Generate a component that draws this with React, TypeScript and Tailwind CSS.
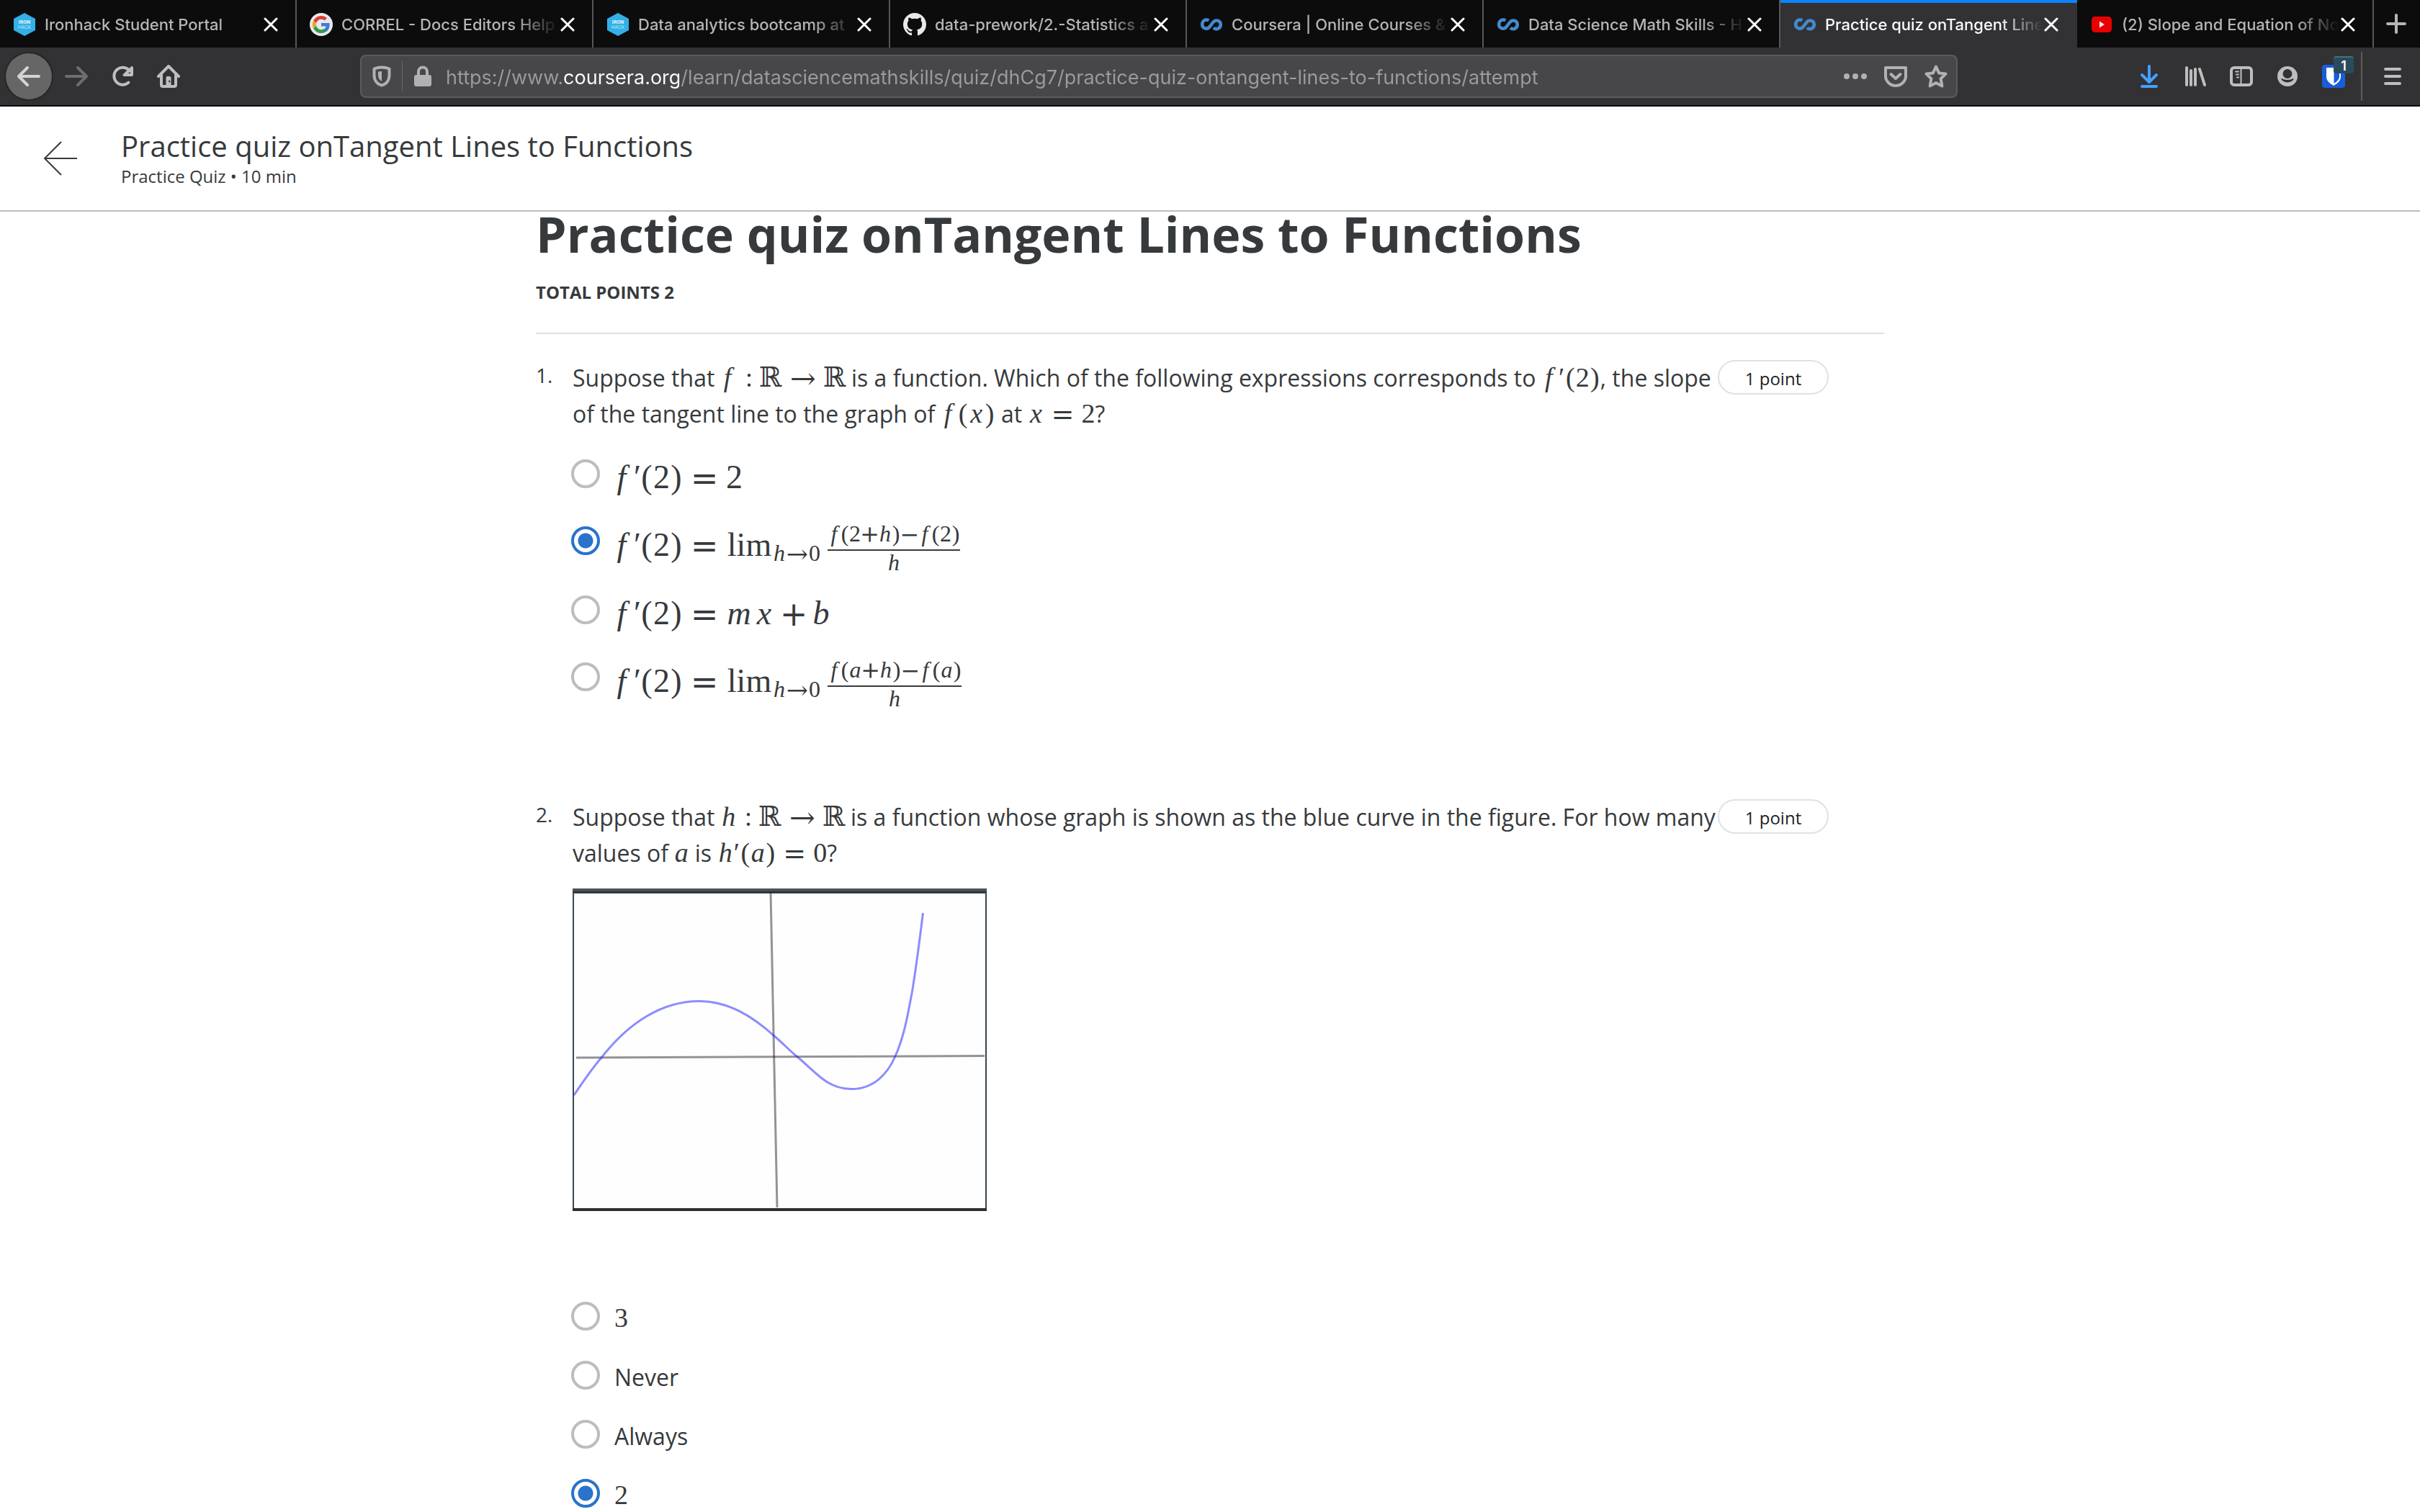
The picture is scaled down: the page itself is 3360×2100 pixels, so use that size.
import React, { useState } from "react";
import type { ReactNode } from "react";

/* ---------- Favicons ---------- */

function IronhackIcon() {
  return (
    <svg viewBox="0 0 32 32" className="size-8 shrink-0" aria-hidden="true">
      <path d="M16 0 31 8v16L16 32 1 24V8z" fill="#33b0e6" />
      <text x="16" y="15" textAnchor="middle" fontFamily="Roboto, sans-serif" fontSize="7" fontWeight="700" fill="#e8f6fd">IRON</text>
      <text x="16" y="22" textAnchor="middle" fontFamily="Roboto, sans-serif" fontSize="7" fontWeight="300" fill="#e8f6fd">HACK</text>
    </svg>
  );
}

function GoogleIcon() {
  return (
    <svg viewBox="0 0 32 32" className="size-8 shrink-0" aria-hidden="true">
      <circle cx="16" cy="16" r="16" fill="#e9e9e9" />
      <g transform="translate(4 4)">
        <path fill="#4279dc" d="M23.7 12.3c0-.8-.1-1.6-.2-2.3H12v4.5h6.6a5.6 5.6 0 0 1-2.4 3.7v3h3.9c2.3-2.1 3.6-5.200 3.600-8.900z" />
        <path fill="#2f9a4d" d="M12 24c3.200 0 6-1.100 8-2.900l-3.900-3c-1.100.7-2.500 1.200-4.100 1.200-3.200 0-5.800-2.100-6.800-5H1.200v3.100A12 12 0 0 0 12 24z" />
        <path fill="#e3a92a" d="M5.200 14.300a7.200 7.200 0 0 1 0-4.600V6.600H1.200a12 12 0 0 0 0 10.800z" />
        <path fill="#d63f34" d="M12 4.700c1.800 0 3.400.6 4.600 1.800L20 3.100A12 12 0 0 0 1.200 6.600l4 3.100c1-2.900 3.600-5 6.800-5z" />
      </g>
    </svg>
  );
}

function GithubIcon() {
  return (
    <svg viewBox="0 0 16 16" className="size-8 shrink-0" aria-hidden="true">
      <path fill="#e9e9e9" d="M8 0C3.580 0 0 3.580 0 8c0 3.540 2.290 6.530 5.470 7.590.4.070.55-.17.55-.38 0-.19-.01-.82-.01-1.490-2.010.37-2.530-.49-2.690-.94-.09-.23-.48-.94-.82-1.130-.28-.15-.68-.52-.01-.53.63-.01 1.080.58 1.230.82.720 1.210 1.870.87 2.330.66.070-.52.28-.87.51-1.070-1.780-.2-3.640-.89-3.640-3.950 0-.87.31-1.590.82-2.150-.08-.2-.36-1.020.08-2.120 0 0 .67-.21 2.200.82.64-.18 1.320-.27 2-.27s1.360.09 2 .27c1.530-1.040 2.200-.82 2.200-.82.44 1.100.16 1.920.08 2.120.51.56.82 1.270.82 2.150 0 3.070-1.870 3.750-3.650 3.950.29.25.54.73.54 1.480 0 1.070-.01 1.930-.01 2.200 0 .21.15.46.55.38A8.010 8.010 0 0 0 16 8c0-4.420-3.580-8-8-8z" />
    </svg>
  );
}

function CourseraIcon() {
  return (
    <svg viewBox="0 0 32 32" className="size-8 shrink-0" aria-hidden="true">
      <path
        d="M12.300 10.600C7.500 7.800 3.200 11 3.200 16s6.800 8.400 10.800 2.600l4-5.200C21.500 8.200 28.800 10.600 28.800 16s-6 8-9.800 4.600"
        fill="none"
        stroke="#4389cb"
        strokeWidth="4.600"
      />
    </svg>
  );
}

function YoutubeIcon() {
  return (
    <svg viewBox="0 0 32 32" className="size-8 shrink-0" aria-hidden="true">
      <rect x="2" y="5" width="28" height="22" rx="5" fill="#e80000" />
      <path d="M13 11.500v9l7-4.500z" fill="#e9e9e9" />
    </svg>
  );
}

/* ---------- Toolbar icons ---------- */

function Glyph({ children, className = "" }: { children: ReactNode; className?: string }) {
  return (
    <svg
      viewBox="0 0 32 32"
      className={`size-8 shrink-0 ${className}`}
      fill="none"
      stroke="currentColor"
      strokeWidth="4"
      strokeLinecap="round"
      strokeLinejoin="round"
      aria-hidden="true"
    >
      {children}
    </svg>
  );
}

const ArrowLeft = () => <Glyph><path d="M30 16H4M14 4 2 16l12 12" /></Glyph>;
const ArrowRight = () => <Glyph><path d="M2 16h26M18 4l12 12-12 12" /></Glyph>;
const Reload = () => (
  <Glyph>
    <path d="M24.500 24.500A12 12 0 1 1 26 8.500" />
    <path d="M29 4v10H18.500M27 6l-7 7" />
  </Glyph>
);
const Home = () => (
  <Glyph>
    <path d="M2 16 16 2l14 14" />
    <path d="M6 14v14q0 2 2 2h16q2 0 2-2V14" />
    <path d="M12.500 29V18q0-2 2-2h3q2 0 2 2v11z" fill="currentColor" stroke="none" />
    <path d="M17.200 22.500v1" stroke="#323234" strokeWidth="2" />
  </Glyph>
);
const Shield = () => (
  <Glyph>
    <path d="M16 3.500c-4 0-8 1-10.500 2v9C5.500 22 10 27 16 28.500 22 27 26.500 22 26.500 14.500v-9c-2.500-1-6.500-2-10.500-2z" />
    <path d="M16 9v14c-3-1.500-5-4.500-5-9v-4.500z" fill="currentColor" stroke="none" />
  </Glyph>
);
const Lock = () => (
  <Glyph>
    <rect x="4" y="14" width="24" height="16" rx="3" fill="currentColor" stroke="none" />
    <path d="M10 15V9.500a6 6 0 0 1 12 0V15" />
  </Glyph>
);
const Dots = () => (
  <Glyph>
    <g fill="currentColor" stroke="none">
      <circle cx="4" cy="16" r="4" />
      <circle cx="16" cy="16" r="4" />
      <circle cx="28" cy="16" r="4" />
    </g>
  </Glyph>
);
const Pocket = () => (
  <Glyph>
    <path d="M2 4h28v11.500a14 13.500 0 0 1-28 0z" />
    <path d="m9.500 13 6.500 6 6.500-6" />
  </Glyph>
);
const Star = () => (
  <Glyph>
    <path d="m16 2.500 4.100 8.900 9.400 1.200-6.900 6.600 1.800 10.300L16 25l-8.400 4.500 1.800-10.300-6.900-6.600 9.400-1.200z" />
  </Glyph>
);
const Download = () => <Glyph className="text-[#459fff]"><path d="M16 2v20M6 14l10 10 10-10M6 30h20" /></Glyph>;
const Library = () => <Glyph><path d="M4 4v24M10 8v20M16 6v22M22 6l7 22" /></Glyph>;
const Sidebar = () => (
  <Glyph>
    <rect x="2" y="4" width="28" height="24" rx="4" />
    <path d="M15.500 5v22M8 9.500h4M9 13.500h3M10 17.500h2" strokeWidth="2" />
  </Glyph>
);
const Account = () => (
  <Glyph>
    <circle cx="16" cy="16" r="14" fill="currentColor" stroke="none" />
    <circle cx="16" cy="12.500" r="6.500" fill="#323234" stroke="none" />
    <path d="M8.500 20c3 4.500 12 4.500 15 0-2.500 2.500-12.500 2.500-15 0z" fill="#323234" stroke="#323234" strokeWidth="2" />
  </Glyph>
);
const Bitwarden = () => (
  <Glyph>
    <rect width="32" height="32" rx="4" fill="#175ddc" stroke="none" />
    <path d="M6 4h20v12.500c0 6-5 9.500-10 12.500C11 26 6 22.500 6 16.500z" fill="#fff" stroke="none" />
    <path d="M16.500 7H24v9.500c0 4-3.500 7-7.500 9.500z" fill="#175ddc" stroke="none" />
  </Glyph>
);
const Menu = () => <Glyph><path d="M6 6h20M6 16h20M6 26h20" /></Glyph>;

/* ---------- Browser chrome ---------- */

const tabs = [
  { title: "Ironhack Student Portal", icon: <IronhackIcon /> },
  { title: "CORREL - Docs Editors Help", icon: <GoogleIcon /> },
  { title: "Data analytics bootcamp at", icon: <IronhackIcon /> },
  { title: "data-prework/2.-Statistics a", icon: <GithubIcon /> },
  { title: "Coursera | Online Courses &", icon: <CourseraIcon /> },
  { title: "Data Science Math Skills - H", icon: <CourseraIcon /> },
  { title: "Practice quiz onTangent Line", icon: <CourseraIcon />, active: true },
  { title: "(2) Slope and Equation of No", icon: <YoutubeIcon /> },
];

function TabStrip() {
  return (
    <div className="flex h-[66px] bg-[#0c0c0d] pr-[2px]">
      <div role="tablist" className="grid min-w-0 flex-1 grid-cols-8">
        {tabs.map((t) => (
          <div
            key={t.title}
            className={
              t.active
                ? "flex min-w-0 items-center border-t-4 border-[#0a84ff] bg-[#323234] pr-[26px] pb-[2px] pl-[18px] text-[#f9f9fa]"
                : "flex min-w-0 items-center border-r-2 border-[#57575a] pt-[2px] pr-6 pl-[18px] text-[#b5b5b6]"
            }
          >
            <button role="tab" aria-selected={!!t.active} className="flex min-w-0 flex-1 items-center gap-3 text-left">
              {t.icon}
              <span className="min-w-0 flex-1 overflow-hidden mask-r-from-80% font-[Inter,sans-serif] text-[22px] leading-8 font-medium whitespace-nowrap">
                {t.title}
              </span>
            </button>
            <button aria-label={`Close ${t.title}`} className="ml-[2px] text-white">
              <svg viewBox="0 0 20 20" className="size-5" aria-hidden="true">
                <path d="m2 2 16 16M18 2 2 18" stroke="currentColor" strokeWidth="3" strokeLinecap="round" />
              </svg>
            </button>
          </div>
        ))}
      </div>
      <button aria-label="New tab" className="flex w-[62px] items-center justify-center text-[#b5b5b6]">
        <svg viewBox="0 0 28 28" className="size-7" aria-hidden="true">
          <path d="M14 2v24M2 14h24" stroke="currentColor" strokeWidth="4" strokeLinecap="round" />
        </svg>
      </button>
    </div>
  );
}

function Toolbar() {
  return (
    <div className="flex h-[82px] items-center border-b-2 border-[#0c0c0d] bg-[#323234] pr-[22px] pl-2 text-[#bebebf]">
      <div className="flex items-center">
        <button aria-label="Back" className="flex size-16 items-center justify-center rounded-full bg-[#666667] text-[#d4d4d4] ring-2 ring-[#262627]">
          <ArrowLeft />
        </button>
        <button aria-label="Forward" className="ml-[18px] text-[#6d6d6f]"><ArrowRight /></button>
        <button aria-label="Reload" className="ml-8"><Reload /></button>
        <button aria-label="Home" className="ml-8"><Home /></button>
      </div>
      <div className="ml-[250px] flex h-[60px] min-w-0 flex-1 items-center rounded-lg border-2 border-[#5b5b5d] bg-[#474749] pr-3 pl-3 text-[#b1b1b3]">
        <button aria-label="Tracking protection"><Shield /></button>
        <span className="mx-3 h-[42px] w-px bg-[#66667a]" />
        <button aria-label="Site information"><Lock /></button>
        <input
          aria-label="Address"
          type="text"
          defaultValue="https://www.coursera.org/learn/datasciencemathskills/quiz/dhCg7/practice-quiz-ontangent-lines-to-functions/attempt"
          className="mx-4 min-w-0 flex-1 bg-[linear-gradient(to_right,#9b9b9d_162px,#ffffff_162px,#ffffff_324px,#9b9b9d_324px)] bg-clip-text pt-[3px] font-[Inter,sans-serif] text-[27px] leading-10 text-transparent caret-white outline-none"
        />
        <div className="flex items-center gap-6">
          <button aria-label="Page actions"><Dots /></button>
          <button aria-label="Save to Pocket"><Pocket /></button>
          <button aria-label="Bookmark"><Star /></button>
        </div>
      </div>
      <div className="ml-[250px] flex items-center gap-8">
        <button aria-label="Downloads"><Download /></button>
        <button aria-label="Library"><Library /></button>
        <button aria-label="Sidebars"><Sidebar /></button>
        <button aria-label="Account"><Account /></button>
        <button aria-label="Bitwarden" className="relative">
          <Bitwarden />
          <span className="absolute -top-3 left-4 flex h-6 w-7 items-center justify-center rounded-sm border-t-2 border-[#47707f] bg-[#2a4b5c] font-[Inter,sans-serif] text-[18px] font-semibold text-white">
            1
          </span>
        </button>
      </div>
      <span className="mr-[26px] ml-[22px] h-[68px] w-[2px] bg-[#5b5b5d]" />
      <button aria-label="Open menu"><Menu /></button>
    </div>
  );
}

/* ---------- Math typesetting ---------- */

type Size = "sm" | "md" | "lg";

const glyphWidth: Record<Size, Record<string, string>> = {
  sm: {
    f: "w-[18px]", "(": "w-[12px]", ")": "w-[12px]", "2": "w-[16px]", "0": "w-[16px]", h: "w-[18px]",
    a: "w-[17px]", "+": "w-[25px]", "−": "w-[25px]", "→": "w-[32px]",
  },
  md: {
    f: "w-[23px] pr-1", "′": "w-[9px]", "(": "w-[15px]", ")": "w-[15px]", "2": "w-[19px]", "0": "w-[19px]",
    "3": "w-[19px]", h: "w-[22px]", a: "w-[20px]", x: "w-[22px]", "=": "w-[52px]", ":": "w-[33px]",
    "ℝ": "w-[28px]", "→": "w-[61px]",
  },
  lg: {
    f: "w-[28px] pr-2", "′": "w-[8px]", "(": "w-[18px]", ")": "w-[18px]", "2": "w-[23px]", "=": "w-[60px]",
    m: "w-[40px] pr-1", x: "w-[26px]", b: "w-[20px]", "+": "w-[56px]", lim: "w-[65px]",
  },
};

const sizeClass: Record<Size, string> = { sm: "text-[32px]", md: "text-[38px]", lg: "text-[46px]" };

function Tex({ size = "md", children }: { size?: Size; children: string }) {
  return (
    <span className={`font-['Liberation_Serif',serif] leading-none whitespace-nowrap ${sizeClass[size]}`}>
      {children.split(" ").map((g, i) => {
        const slant = /^[a-z]$/.test(g) ? "italic" : "";
        const symbol = /[ℝ→=+−]/.test(g) ? "font-['DejaVu_Math_TeX_Gyre','DejaVu_Serif',serif]" : "";
        return (
          <span
            key={i}
            className={`inline-flex h-8 items-baseline justify-center leading-8 ${slant} ${symbol} ${glyphWidth[size][g]}`}
          >
            {g}
          </span>
        );
      })}
    </span>
  );
}

function Limit({ top }: { top: string }) {
  return (
    <>
      <Tex size="lg">{"f ′ ( 2 ) = lim"}</Tex>
      <span className="inline-block align-[-7px] leading-none"><Tex size="sm">{"h → 0"}</Tex></span>
      <span className="ml-[10px] inline-flex flex-col items-center align-[20px] leading-none">
        <span className="flex border-b-2 border-[#373a3c] pb-1"><Tex size="sm">{top}</Tex></span>
        <span className="flex"><Tex size="sm">h</Tex></span>
      </span>
    </>
  );
}

/* ---------- Quiz ---------- */

type Option = { label: ReactNode; rowClass: string; labelClass?: string };

function Options({ name, options, initial }: { name: string; options: Option[]; initial: number }) {
  const [value, setValue] = useState(initial);
  return (
    <div className="-ml-[2px] flex flex-col">
      {options.map((o, i) => (
        <label key={i} className={`flex cursor-pointer items-start gap-5 ${o.rowClass}`}>
          <input
            type="radio"
            name={name}
            checked={value === i}
            onChange={() => setValue(i)}
            className="size-10 shrink-0 appearance-none rounded-full border-4 border-[#bdbdbd] bg-white checked:border-[#2a73cc] checked:bg-[radial-gradient(circle,#2a73cc_10px,transparent_11px)]"
          />
          <span className={`text-[32px] leading-[46px] whitespace-nowrap ${o.labelClass ?? ""}`}>{o.label}</span>
        </label>
      ))}
    </div>
  );
}

function Question({ number, prompt, children }: { number: number; prompt: ReactNode; children: ReactNode }) {
  return (
    <section className="flex items-start pr-[77px]">
      <span className="w-[51px] shrink-0 text-[28px] leading-[42px]">{number}.</span>
      <div className="min-w-0 flex-1">
        <div className="text-[32px] leading-[50px] whitespace-nowrap">{prompt}</div>
        {children}
      </div>
      <span className="flex h-12 w-[154px] shrink-0 items-center justify-center rounded-full border-2 border-[#e1e1e1] pt-1 text-[24px] text-[#1f1f1f]">
        1 point
      </span>
    </section>
  );
}

function Graph() {
  return (
    <svg viewBox="0 0 575 448" className="mt-6 block h-auto w-[575px]" role="img" aria-label="Graph of h">
      <rect x="1" y="4" width="573" height="442" fill="#fefefe" stroke="#37474f" strokeWidth="2" />
      <rect width="575" height="7" fill="#4d5256" />
      <rect y="4" width="575" height="2" fill="#263238" />
      <rect y="444" width="575" height="4" fill="#2b2d2f" />
      <path d="M5 235 572 232.500" stroke="#000" strokeOpacity=".42" strokeWidth="3" />
      <path d="M275 6 284 443" stroke="#000" strokeOpacity=".42" strokeWidth="3" />
      <path
        d="M2 287C16 266 27 250 40 235C79 185 126 156 177 156.500C217 157 250 178 279 204C291 214 300 224 311 233C336 253 352 278 386 278.500C419 279 438 256 448 233C462 202 467 165 471 146C477 111 482 70 486.500 34"
        fill="none"
        stroke="#1a1aff"
        strokeOpacity=".5"
        strokeWidth="3"
      />
    </svg>
  );
}

export default function App() {
  return (
    <div className="flex h-screen flex-col overflow-hidden bg-white font-['Open_Sans',sans-serif] text-[#373a3c]">
      <TabStrip />
      <Toolbar />
      <header className="flex h-[146px] shrink-0 items-center border-b-2 border-[#bdbdbd] pl-[60px]">
        <button aria-label="Back to course" className="mr-[60px]">
          <svg viewBox="0 0 48 48" className="size-12" fill="none" stroke="currentColor" strokeWidth="2" aria-hidden="true">
            <path d="M47 24H2M25 1 2 24l23 23" />
          </svg>
        </button>
        <div className="pb-[2px]">
          <div className="text-[40px] leading-[52px]">Practice quiz onTangent Lines to Functions</div>
          <div className="text-[24px] leading-8">Practice Quiz • 10 min</div>
        </div>
      </header>
      <main className="min-h-0 flex-1 overflow-hidden">
        <div className="mx-auto max-w-[1872px]">
          <h1 className="text-[68px] leading-[62px] font-bold">Practice quiz onTangent Lines to Functions</h1>
          <p className="mt-[34px] text-[24px] leading-8 font-bold">TOTAL POINTS 2</p>
          <hr className="mt-10 mb-9 border-t-2 border-[#e1e1e1]" />
          <Question
            number={1}
            prompt={
              <>
                Suppose that <Tex>{"f : ℝ → ℝ"}</Tex> is a function. Which of the following expressions corresponds to{" "}
                <Tex>{"f ′ ( 2 )"}</Tex>, the slope
                <br />
                of the tangent line to the graph of <Tex>{"f ( x )"}</Tex> at <Tex>{"x = 2"}</Tex>?
              </>
            }
          >
            <div className="mt-[38px]">
              <Options
                name="question-1"
                initial={1}
                options={[
                  { label: <Tex size="lg">{"f ′ ( 2 ) = 2"}</Tex>, rowClass: "h-[93px]", labelClass: "pt-[2px]" },
                  { label: <Limit top="f ( 2 + h ) − f ( 2 )" />, rowClass: "h-24", labelClass: "-mt-[6px]" },
                  { label: <Tex size="lg">{"f ′ ( 2 ) = m x + b"}</Tex>, rowClass: "h-[93px]", labelClass: "pt-[2px]" },
                  { label: <Limit top="f ( a + h ) − f ( a )" />, rowClass: "h-24", labelClass: "-mt-[6px]" },
                ]}
              />
            </div>
          </Question>
          <div className="mt-[94px]">
            <Question
              number={2}
              prompt={
                <>
                  Suppose that <Tex>{"h : ℝ → ℝ"}</Tex> is a function whose graph is shown as the blue curve in the figure. For how many
                  <br />
                  values of <Tex>a</Tex> is <Tex>{"h ′ ( a ) = 0"}</Tex>?
                </>
              }
            >
              <Graph />
              <div className="mt-[126px]">
                <Options
                  name="question-2"
                  initial={3}
                  options={[
                    { label: <Tex>3</Tex>, rowClass: "h-[82px]" },
                    { label: "Never", rowClass: "h-[82px]" },
                    { label: "Always", rowClass: "h-[82px]" },
                    { label: <Tex>2</Tex>, rowClass: "h-[82px]" },
                  ]}
                />
              </div>
            </Question>
          </div>
        </div>
      </main>
    </div>
  );
}
